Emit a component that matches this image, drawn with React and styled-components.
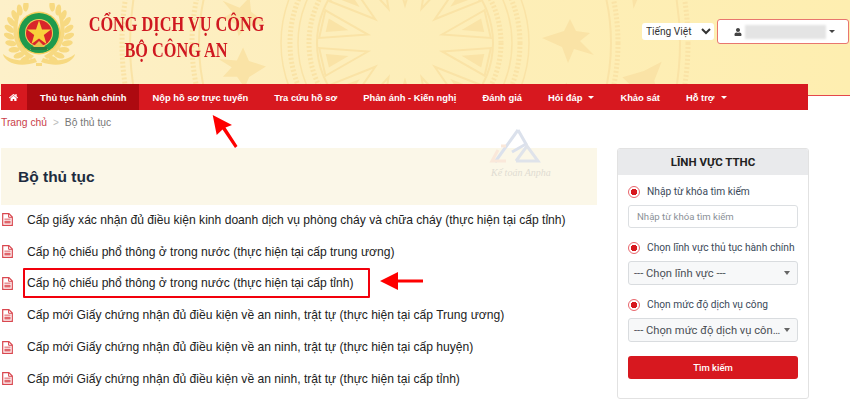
import styled, { createGlobalStyle } from "styled-components";
import { FaHome, FaUser } from "react-icons/fa";

const GlobalStyle = createGlobalStyle`
  html, body {
    margin: 0;
    padding: 0;
    background: #fff;
  }
  body {
    width: 850px;
    height: 402px;
    overflow: hidden;
    font-family: "Liberation Sans", Arial, sans-serif;
  }
  * { box-sizing: border-box; }
`;

const RED = "#d7181f";

const navItems = [
  { label: "Thủ tục hành chính", active: true },
  { label: "Nộp hồ sơ trực tuyến" },
  { label: "Tra cứu hồ sơ" },
  { label: "Phản ánh - Kiến nghị" },
  { label: "Đánh giá" },
  { label: "Hỏi đáp", caret: true },
  { label: "Khảo sát" },
  { label: "Hỗ trợ", caret: true },
];

const procedures = [
  { name: "Cấp giấy xác nhận đủ điều kiện kinh doanh dịch vụ phòng cháy và chữa cháy (thực hiện tại cấp tỉnh)" },
  { name: "Cấp hộ chiếu phổ thông ở trong nước (thực hiện tại cấp trung ương)" },
  { name: "Cấp hộ chiếu phổ thông ở trong nước (thực hiện tại cấp tỉnh)", marked: true },
  { name: "Cấp mới Giấy chứng nhận đủ điều kiện về an ninh, trật tự (thực hiện tại cấp Trung ương)" },
  { name: "Cấp mới Giấy chứng nhận đủ điều kiện về an ninh, trật tự (thực hiện tại cấp huyện)" },
  { name: "Cấp mới Giấy chứng nhận đủ điều kiện về an ninh, trật tự (thực hiện tại cấp tỉnh)" },
];

const Header = styled.header`
  position: relative;
  height: 96px;
  overflow: hidden;
  display: flex;
  justify-content: space-between;
  background: linear-gradient(90deg, #fdf0c9 0%, #fdeebb 40%, #feeeb0 100%);
  border-bottom: 1.5px solid #e4474b;
`;

const DrumArt = styled.svg`
  position: absolute;
  left: 0;
  top: 0;
  pointer-events: none;
`;

const Brand = styled.div`
  position: relative;
  display: flex;
  align-items: flex-start;
`;

const Logo = styled.svg`
  display: block;
  flex: none;
  width: 76px;
  height: 68px;
  margin: 3px 0 0 1px;
`;

const Title = styled.h1`
  flex: none;
  margin: 11px 0 0 -19.5px;
  width: 236px;
  text-align: center;
  font-family: "Liberation Serif", serif;
  font-size: 22px;
  line-height: 26px;
  font-weight: 700;
  color: #cf1820;
  white-space: nowrap;
  transform: scaleX(0.74);
`;

const Controls = styled.div`
  position: relative;
  display: flex;
  align-items: center;
  gap: 3px;
  height: 25px;
  margin: 19px 1px 0 0;
`;

const LangSelect = styled.select`
  width: 72px;
  height: 17px;
  padding: 0;
  border: none;
  border-radius: 3px;
  background: #fff;
  font-family: "Roboto", sans-serif;
  font-size: 10.2px;
  color: #333;
`;

const UserBox = styled.div`
  width: 132px;
  height: 25px;
  display: flex;
  align-items: center;
  padding-left: 16px;
  background: #fff;
  border: 1.5px solid #e8766f;
  border-radius: 3px;
  color: #444;
  font-size: 8px;
`;

const BlurredName = styled.span`
  width: 81px;
  height: 14px;
  margin-left: 3px;
  background: #e4e4e4;
  filter: blur(1px);
`;

const UserCaret = styled.span`
  margin-left: 3px;
  border-left: 3px solid transparent;
  border-right: 3px solid transparent;
  border-top: 3px solid #444;
`;

const Nav = styled.nav`
  position: relative;
  display: flex;
  width: 807px;
  height: 26px;
  margin: -12px 0 0 1px;
  background: ${RED};
  color: #fff;
  font-size: 9.4px;
  font-weight: 700;
`;

const NavItem = styled.a`
  display: flex;
  align-items: center;
  gap: 6px;
  padding: 0 13px;
  white-space: nowrap;
  background: ${(p) => (p.$active ? "#ad0a10" : "transparent")};
`;

const HomeItem = styled(NavItem)`
  width: 26px;
  padding: 0 0 0 8px;
  font-size: 9px;
`;

const NavCaret = styled.span`
  border-left: 3px solid transparent;
  border-right: 3px solid transparent;
  border-top: 3px solid #fff;
`;

const Crumbs = styled.div`
  display: flex;
  align-items: center;
  gap: 6px;
  height: 25px;
  padding-left: 1px;
  font-size: 10.3px;
  color: #777;
`;

const CrumbLink = styled.a`
  color: #c9404a;
`;

const CrumbSep = styled.span`
  color: #bbb;
  font-size: 10px;
`;

const Main = styled.main`
  position: relative;
  display: flex;
  gap: 20px;
  margin: 13px 0 0 1px;
`;

const Content = styled.section`
  width: 596px;
`;

const PanelHead = styled.div`
  display: flex;
  align-items: center;
  height: 57px;
  padding-left: 17px;
  background: #fbf7e8;
`;

const PanelTitle = styled.h2`
  margin: 0;
  font-size: 15.5px;
  font-weight: 700;
  color: #1d2c40;
`;

const List = styled.ul`
  list-style: none;
  margin: -1px 0 0;
  padding: 0;
`;

const Row = styled.li`
  display: flex;
  align-items: center;
  gap: 14px;
  height: 31.8px;
  padding-left: 1px;
`;

const DocIcon = styled.svg`
  flex: none;
  width: 11px;
  height: 13px;
`;

const RowText = styled.span`
  position: relative;
  font-size: 12.1px;
  color: #222;
  white-space: nowrap;
  &::after {
    content: ${(p) => (p.$marked ? '""' : "none")};
    position: absolute;
    left: -4px;
    right: -16px;
    top: -8px;
    bottom: -8px;
    border: 2.5px solid #f2000c;
    border-radius: 1px;
  }
`;

const Aside = styled.aside`
  width: 192px;
  height: 251px;
  border: 1px solid #e2e2e2;
  border-radius: 3px;
  overflow: hidden;
`;

const AsideHead = styled.div`
  height: 26px;
  display: flex;
  align-items: center;
  justify-content: center;
  background: #e9eaec;
  font-family: "Roboto", sans-serif;
  font-size: 11.5px;
  font-weight: 700;
  color: #222;
`;

const AsideBody = styled.form`
  display: flex;
  flex-direction: column;
  padding: 9px 10px 0;
`;

const Field = styled.div`
  display: flex;
  flex-direction: column;
  gap: 6px;
  margin-bottom: 12px;
`;

const RadioLabel = styled.label`
  display: flex;
  align-items: center;
  gap: 7px;
  height: 15px;
  font-family: "Roboto", sans-serif;
  font-size: 10.2px;
  color: #3b4a5a;
  white-space: nowrap;
`;

const RadioMark = styled.span`
  flex: none;
  width: 12px;
  height: 12px;
  border-radius: 50%;
  border: 1px solid #e8666c;
  background: radial-gradient(circle, #d7181f 0 3px, #fff 3.5px);
`;

const TextInput = styled.input`
  width: 100%;
  height: 23px;
  padding: 0 8px;
  border: 1px solid #dcdfe2;
  border-radius: 3px;
  font-family: "Roboto", sans-serif;
  font-size: 9.6px;
  &::placeholder { color: #8b9198; }
`;

const FakeSelect = styled.div`
  display: flex;
  align-items: center;
  justify-content: space-between;
  height: 24px;
  padding: 0 7px 0 5px;
  border: 1px solid #d9dcdf;
  border-radius: 3px;
  background: #f7f8f9;
  font-family: "Roboto", sans-serif;
  font-size: 11.2px;
  color: #4a4f55;
  white-space: nowrap;
`;

const SelectCaret = styled.span`
  flex: none;
  border-left: 3px solid transparent;
  border-right: 3px solid transparent;
  border-top: 4px solid #666;
`;

const SearchButton = styled.button`
  height: 23px;
  margin-top: 2px;
  border: none;
  border-radius: 3px;
  background: ${RED};
  color: #fff;
  font-family: "Roboto", sans-serif;
  font-size: 9.5px;
  font-weight: 500;
`;

const Watermark = styled.svg`
  position: absolute;
  left: 479px;
  top: -22px;
  pointer-events: none;
`;

const Callout = styled.svg`
  position: absolute;
  left: 0;
  top: 0;
  pointer-events: none;
`;

const CX = 405;
const CY = 43;
const RAYS = Array.from({ length: 14 }, (_, i) => (i * 360) / 14 + 12.8);

const polar = (r, deg) => {
  const a = (deg * Math.PI) / 180;
  return `${(CX + r * Math.cos(a)).toFixed(1)},${(CY + r * Math.sin(a)).toFixed(1)}`;
};

// rough trống đồng motif behind the header
const Drum = () => (
  <DrumArt width="850" height="96">
    <g fill="none" stroke="#fae3a6">
      {RAYS.map((d) => (
        <g key={d}>
          <polygon points={`${polar(38, d)} ${polar(86, d - 9.5)} ${polar(86, d + 9.5)}`} strokeWidth="2" />
          <polygon points={`${polar(58, d)} ${polar(80, d - 5)} ${polar(80, d + 5)}`} fill="#fae3a6" stroke="none" />
        </g>
      ))}
      <circle cx={CX} cy={CY} r="88" strokeWidth="2" />
      <circle cx={CX} cy={CY} r="96" strokeWidth="5" strokeDasharray="2 2" />
      <circle cx={CX} cy={CY} r="107" strokeWidth="1.5" />
      <circle cx={CX} cy={CY} r="115" strokeWidth="5" strokeDasharray="2 2" />
      <circle cx={CX} cy={CY} r="124" strokeWidth="1.5" />
      <circle cx={CX} cy={CY} r="206" strokeWidth="2" />
      <circle cx={CX} cy={CY} r="213" strokeWidth="5" strokeDasharray="2 2" />
      <circle cx={CX} cy={CY} r="275" strokeWidth="2" />
      <circle cx={CX} cy={CY} r="283" strokeWidth="5" strokeDasharray="2 2" />
    </g>
    <g fill="#fae3a6">
      {[-22, 0, 22].map((d) => (
        <path key={d} transform={`rotate(${d} ${CX} ${CY}) translate(${CX + 165} ${CY})`} d="M-28 -5 L-6 -12 L0 -24 L6 -12 L20 -10 L10 -2 L24 12 L4 6 L-2 20 L-8 4 Z" />
      ))}
      {[-14, 10].map((d) => (
        <path key={d} transform={`rotate(${d} ${CX} ${CY}) translate(${CX + 240} ${CY})`} d="M-20 -4 L0 -14 L16 -26 L12 -6 L20 10 L2 6 L-10 22 L-8 4 Z" />
      ))}
      {[172, 190].map((d) => (
        <path key={d} transform={`rotate(${d} ${CX} ${CY}) translate(${CX + 165} ${CY})`} d="M-24 -4 L-6 -12 L0 -22 L6 -10 L20 -8 L10 0 L22 10 L4 6 L-4 18 L-8 4 Z" />
      ))}
    </g>
  </DrumArt>
);

// leaves of the wreath run along an arc around the badge
const LEAVES = [118, 132, 146, 160, 174, 188, 202, 216, 230, 244];

const Wreath = ({ flip }) => (
  <g transform={flip ? "translate(76 0) scale(-1 1)" : undefined} fill="#f7d981">
    <path d="M34 55 C20 60 8 56 2 51 C3 58 16 66 36 59 Z" />
    <path d="M30 56 C14 48 7 30 17 6 L20 8 C12 28 19 46 33 53 Z" />
    {LEAVES.map((d) => {
      const a = (d * Math.PI) / 180;
      const x = 38 + 30 * Math.cos(a);
      const y = 30 + 30 * Math.sin(a);
      return <ellipse key={d} cx={x} cy={y} rx="2.8" ry="5.6" transform={`rotate(${d - 60} ${x} ${y})`} />;
    })}
  </g>
);

const PoliceBadge = () => (
  <Logo viewBox="0 0 76 68">
    <Wreath />
    <Wreath flip />
    <circle cx="38" cy="30" r="21.5" fill="#f5cf5e" />
    <circle cx="38" cy="30" r="20" fill="#1f9a4c" />
    <circle cx="38" cy="30" r="14" fill="#f5cf5e" />
    <circle cx="38" cy="30" r="13" fill="#d9262a" />
    <polygon points="38,17.5 41,26.5 50,26.5 42.8,32 45.5,41 38,35.5 30.5,41 33.2,32 26,26.5 35,26.5" fill="#f9d13b" />
    <path d="M29 47 L38 38 L47 47 Z" fill="#e8c04c" />
    <rect x="30" y="44" width="16" height="3" fill="#2d7d3e" />
    <rect x="35" y="60" width="6" height="3" fill="#f7d981" />
  </Logo>
);

const DocGlyph = () => (
  <DocIcon viewBox="0 0 11 13">
    <path d="M.7.7h6.2l3.4 3.4v8.2H.7z" fill="#fff" stroke="#d9474f" strokeWidth="1.2" />
    <path d="M6.6.9v3.4h3.4" fill="none" stroke="#d9474f" />
    <rect x="2.4" y="5.6" width="6.2" height="1.1" fill="#e0656b" />
    <rect x="2.4" y="7.7" width="6.2" height="2.8" fill="#e0656b" />
  </DocIcon>
);

const AnphaMark = () => (
  <Watermark width="90" height="56">
    <g fill="none" strokeWidth="3">
      <path d="M38 4 L15 36" stroke="#dbe1ec" />
      <path d="M38 4 L46 18 L32 26" stroke="#dbe1ec" />
      <path d="M36 35 L47 20 L58 35 H36" stroke="#dfe3ea" />
      <path d="M26 20 L21 20 L22 20 M18 24 L12 35 H26" stroke="#fae8da" />
    </g>
    <text x="11" y="50" fontFamily="Liberation Serif, serif" fontStyle="italic" fontSize="10" fill="#dfdcd2">
      Kế toán Anpha
    </text>
  </Watermark>
);

const Arrows = () => (
  <Callout width="850" height="402">
    <path d="M212.7 115 L232 125 L225.5 127.5 L237.5 146 L235 148 L222.5 129.5 L216.7 135 Z" fill="#fe0000" />
    <path d="M380 281 L398 272 L398 279.5 L423 279.5 L423 282.5 L398 282.5 L398 290 Z" fill="#fe0000" />
  </Callout>
);

export default function App() {
  return (
    <>
      <GlobalStyle />
      <Header>
        <Drum />
        <Brand>
          <PoliceBadge />
          <Title>
            CỔNG DỊCH VỤ CÔNG
            <br />
            BỘ CÔNG AN
          </Title>
        </Brand>
        <Controls>
          <LangSelect defaultValue="vi">
            <option value="vi">Tiếng Việt</option>
          </LangSelect>
          <UserBox>
            <FaUser />
            <BlurredName />
            <UserCaret />
          </UserBox>
        </Controls>
      </Header>
      <Nav>
        <HomeItem>
          <FaHome />
        </HomeItem>
        {navItems.map((item) => (
          <NavItem key={item.label} $active={item.active}>
            {item.label}
            {item.caret && <NavCaret />}
          </NavItem>
        ))}
      </Nav>
      <Crumbs>
        <CrumbLink>Trang chủ</CrumbLink>
        <CrumbSep>&gt;</CrumbSep>
        <span>Bộ thủ tục</span>
      </Crumbs>
      <Main>
        <Content>
          <PanelHead>
            <PanelTitle>Bộ thủ tục</PanelTitle>
          </PanelHead>
          <List>
            {procedures.map((p, i) => (
              <Row key={i}>
                <DocGlyph />
                <RowText $marked={p.marked}>{p.name}</RowText>
              </Row>
            ))}
          </List>
        </Content>
        <Aside>
          <AsideHead>LĨNH VỰC TTHC</AsideHead>
          <AsideBody>
            <Field>
              <RadioLabel>
                <RadioMark />
                Nhập từ khóa tìm kiếm
              </RadioLabel>
              <TextInput placeholder="Nhập từ khóa tìm kiếm" />
            </Field>
            <Field>
              <RadioLabel>
                <RadioMark />
                Chọn lĩnh vực thủ tục hành chính
              </RadioLabel>
              <FakeSelect>
                --- Chọn lĩnh vực ---
                <SelectCaret />
              </FakeSelect>
            </Field>
            <Field>
              <RadioLabel>
                <RadioMark />
                Chọn mức độ dịch vụ công
              </RadioLabel>
              <FakeSelect>
                --- Chọn mức độ dịch vụ côn…
                <SelectCaret />
              </FakeSelect>
            </Field>
            <SearchButton type="button">Tìm kiếm</SearchButton>
          </AsideBody>
        </Aside>
        <AnphaMark />
      </Main>
      <Arrows />
    </>
  );
}
